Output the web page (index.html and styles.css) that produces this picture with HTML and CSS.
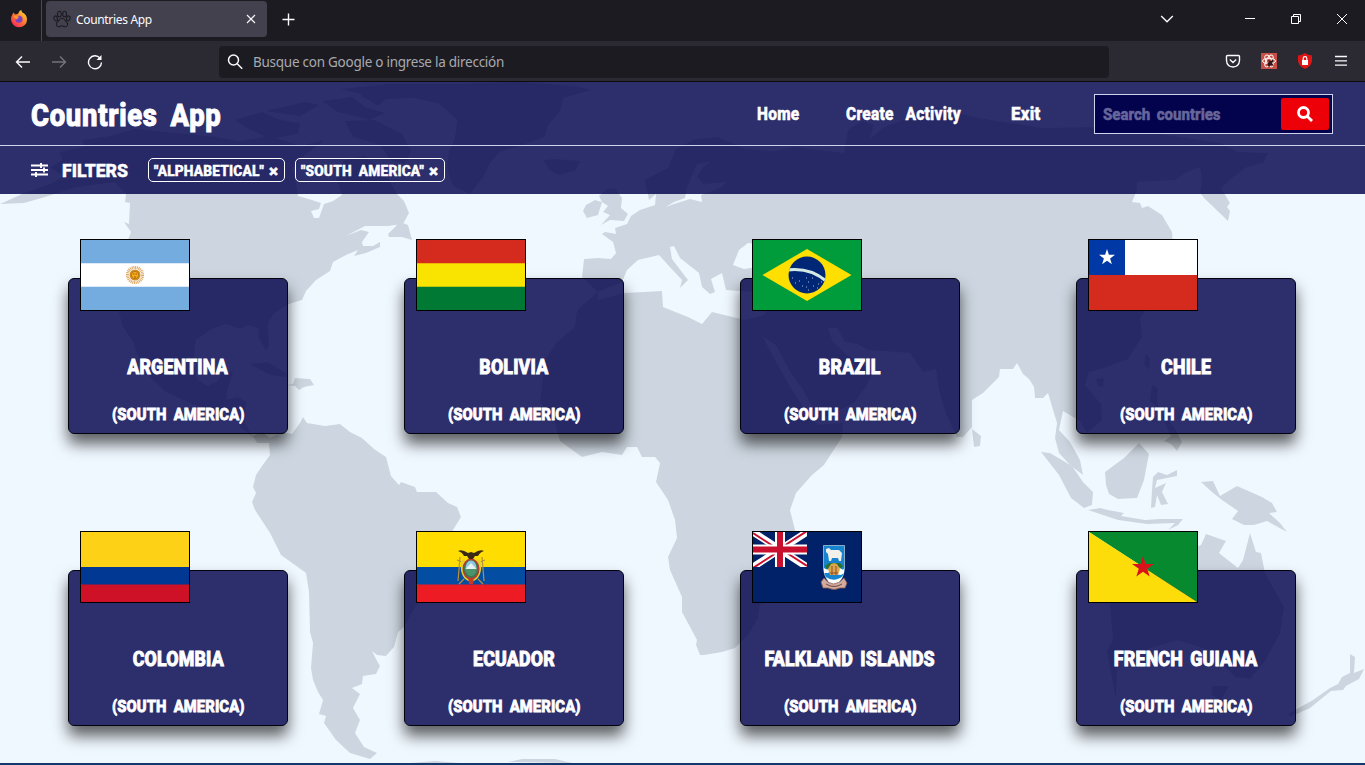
FILE: index.html
```html
<!DOCTYPE html>
<html lang="es">
<head>
<meta charset="utf-8">
<title>Countries App</title>
<link rel="stylesheet" href="styles.css">
</head>
<body>
<div class="browser">
  <div class="tabbar">
    <div class="fx">
      <svg width="18" height="18" viewBox="0 0 18 18"><defs><linearGradient id="fg" x1="1" y1="0" x2="0.2" y2="1"><stop offset="0" stop-color="#fff04a"/><stop offset=".45" stop-color="#ff8a2a"/><stop offset="1" stop-color="#f4235c"/></linearGradient></defs><path d="M2.4 4.6 3.6 2.6 5 4.4Q6.2 4 7.2 4.3 8.7 3.5 9.5 1L11.3 0 12 2.3Q16.8 4.2 17 9.4A8 7.8 0 0 1 1 9.6Q1 6.6 2.4 4.6Z" fill="url(#fg)"/><circle cx="9" cy="9.3" r="3.5" fill="#7b3fc4"/><path d="M3.5 6Q7 5 9.8 7.2 7.2 7.2 7.5 9.4 5 9.5 3.5 6Z" fill="#ff9630"/></svg>
    </div>
    <div class="tab">
      <svg class="paw" width="18" height="18" viewBox="0 0 18 18" fill="none" stroke="#1c1b22" stroke-width="1.1"><ellipse cx="6.4" cy="4" rx="1.9" ry="2.8"/><ellipse cx="11.6" cy="4" rx="1.9" ry="2.8"/><ellipse cx="2.7" cy="8.4" rx="1.7" ry="2.5" transform="rotate(-15 2.7 8.4)"/><ellipse cx="15.3" cy="8.4" rx="1.7" ry="2.5" transform="rotate(15 15.3 8.4)"/><path d="M9 8.2C6.2 8.2 6 11 4.3 12.2 2.6 13.8 3.5 16.8 6 16.7 7.5 16.5 8 15.8 9 15.8S10.5 16.5 12 16.7C14.5 16.8 15.4 13.8 13.7 12.2 12 11 11.8 8.2 9 8.2Z"/></svg>
      <span class="tab-title">Countries App</span>
      <svg width="10" height="10" viewBox="0 0 10 10" stroke="#fbfbfe" stroke-width="1.1"><path d="M1 1 9 9M9 1 1 9"/></svg>
    </div>
    <svg class="plus" width="13" height="13" viewBox="0 0 13 13" stroke="#fbfbfe" stroke-width="1.4"><path d="M6.5 .5V12.500M.5 6.500H12.500"/></svg>
    <div class="window-controls">
      <svg width="14" height="10" viewBox="0 0 14 10" fill="none" stroke="#fbfbfe" stroke-width="1.4"><path d="M1.200 2 7 7.800 12.800 2"/></svg>
      <svg class="min" width="10" height="10" viewBox="0 0 10 10" stroke="#fff"><path d="M0 4.500H10"/></svg>
      <svg width="10" height="10" viewBox="0 0 10 10" fill="none" stroke="#fff"><path d="M.5 2.500H7.500V9.500H.5ZM2.500 2.500V.5H9.500V7.500H7.500"/></svg>
      <svg width="10" height="10" viewBox="0 0 10 10" stroke="#fff"><path d="M0 0 10 10M10 0 0 10"/></svg>
    </div>
  </div>
  <div class="toolbar">
    <div class="nav-buttons">
      <svg width="16" height="16" viewBox="0 0 16 16" fill="none" stroke="#fbfbfe" stroke-width="1.400"><path d="M15 8H1.500M7 2.500 1.500 8 7 13.500"/></svg>
      <svg width="16" height="16" viewBox="0 0 16 16" fill="none" stroke="#74737b" stroke-width="1.400"><path d="M1 8H14.500M9 2.500 14.500 8 9 13.500"/></svg>
      <svg width="16" height="16" viewBox="0 0 16 16" fill="none" stroke="#fbfbfe" stroke-width="1.400"><path d="M13 4.100A6.500 6.500 0 1 0 14.500 8.500"/><path d="M14.500 1V6H9.500Z" fill="#fbfbfe" stroke="none"/></svg>
    </div>
    <div class="urlbar">
      <svg width="16" height="16" viewBox="0 0 16 16" fill="none" stroke="#fbfbfe" stroke-width="1.500"><circle cx="6.500" cy="6" r="5"/><path d="M10.200 9.700 15.200 14.800"/></svg>
      <span>Busque con Google o ingrese la dirección</span>
    </div>
    <div class="extensions">
      <svg width="16" height="16" viewBox="0 0 16 16" fill="none" stroke="#fbfbfe" stroke-width="1.400"><path d="M2.500 2.500H13.500Q14.500 2.500 14.500 3.500V7.500Q14 13.800 8 14 2 13.800 1.500 7.500V3.500Q1.500 2.500 2.500 2.500ZM4.800 6.500 8 9.500 11.200 6.500"/></svg>
      <svg width="16" height="16" viewBox="0 0 16 16"><path d="M0 0H16V16H0Z" fill="#c94f46"/><g fill="none" stroke="#fff" stroke-width="1"><ellipse cx="8" cy="8" rx="6.500" ry="2.700"/><ellipse cx="8" cy="8" rx="6.500" ry="2.700" transform="rotate(60 8 8)"/><ellipse cx="8" cy="8" rx="6.500" ry="2.700" transform="rotate(120 8 8)"/></g><path d="M7 7 10 8 12 6V9L11 10 13 13 10 12 8 14 6 11 8 9Z" fill="#30181c"/></svg>
      <svg width="16" height="16" viewBox="0 0 16 16"><path d="M8 0Q11 2 15 2.500V8Q14 13.500 8 16 2 13.500 1 8V2.500Q5 2 8 0Z" fill="#dd1515"/><path d="M5 7H11V12H5Z" fill="#fff"/><path d="M6.200 7V5.500A1.800 1.800 0 0 1 9.800 5.500V7" fill="none" stroke="#fff" stroke-width="1.200"/></svg>
      <svg class="burger" width="14" height="12" viewBox="0 0 14 12" stroke="#fbfbfe" stroke-width="1.300"><path d="M1 1.500H13M1 5.800H13M1 10.200H13"/></svg>
    </div>
  </div>
</div>

<div class="page">
  <svg class="map" viewBox="0 82 1365 681" preserveAspectRatio="none">
    <g fill="#cdd6e0">
      <path d="M0 204 22 194 50 184 64 176 50 168 62 160 60 152 84 147 83 140 110 136 135 129 175 133 215 137 240 141 270 136 300 146 325 140 305 155 292 168 296 182 298 196 312 200 321 203 319 209 311 211 314 218 319 218 324 204 333 201 342 195 336 178 344 160 365 156 385 172 397 194 404 201 409 213 403 224 388 226 365 226 346 236 361 230 369 232 362 242 363 246 373 246 380 242 380 247 366 253 354 256 358 250 346 255 333 262 330 271 316 280 306 291 302 300 289 304 274 313 268 323 269 345 266 351 259 338 258 328 248 325 240 329 226 324 212 329 196 340 193 362 197 379 207 386 218 381 222 373 233 372 227 391 226 400 238 397 246 402 245 423 252 436 262 432 270 438 282 432 292 434 300 423 303 417 307 423 325 426 340 424 350 432 362 438 374 449 386 457 391 476 399 485 401 482 415 487 417 492 436 492 448 503 457 507 461 517 453 530 446 543 442 568 430 590 418 602 404 627 398 632 394 647 386 656 377 655 372 651 376 659 380 666 376 674 363 676 362 684 352 688 360 694 353 708 360 720 355 733 364 747 377 753 370 759 350 753 336 740 324 723 326 716 319 714 323 700 318 692 313 680 311 668 313 643 310 632 309 592 306 573 281 555 270 533 255 510 252 502 256 493 253 487 256 475 262 466 270 455 269 443 257 443 254 438 240 427 237 418 221 411 208 409 192 404 166 392 152 379 140 362 128 328 127 319 132 325 137 347 153 372 135 345 122 325 119 312 128 260 128 240 131 232 124 222 129 224 130 203 125 202 126 194 115 182 100 184 73 188 45 197 24 203Z"/>
      <path d="M340 89 390 84 455 84 520 82 575 86 592 90 563 98 560 112 548 125 545 137 522 145 500 152 490 163 484 176 470 194 453 186 447 168 449 151 455 138 457 120 440 104 414 98 382 99Z"/>
      <path d="M235 120 262 112 280 120 300 123 298 134 270 139 245 127ZM265 111 305 102 320 105 300 116ZM322 101 352 97 365 107 385 113 370 120 338 112ZM345 121 375 120 402 134 411 151 405 164 390 160 380 145 353 137ZM360 95 395 91 378 106ZM544 160 555 159 580 161 575 171 558 175 548 169ZM250 364 268 362 286 373 287 377 270 375ZM295 378 310 379 314 385 304 387 299 390 295 386 287 385 293 384ZM388 234 400 222 408 225 412 240 402 237 389 237Z"/>
      <path fill-rule="evenodd" d="M649 200 645 180 668 168 676 149 695 139 718 137 745 149 775 151 794 147 844 153 848 130 862 121 874 125 870 139 884 127 909 118 936 107 978 118 1043 128 1097 127 1153 133 1220 143 1237 152 1268 153 1263 163 1247 167 1233 177 1221 188 1230 203 1227 207 1230 211 1228 221 1205 199 1200 193 1202 178 1200 167 1187 172 1175 180 1137 182 1137 190 1132 202 1140 203 1142 208 1148 206 1162 215 1172 232 1173 246 1162 290 1140 318 1142 337 1128 359 1104 368 1089 372 1085 385 1101 404 1102 420 1087 433 1080 421 1063 411 1059 430 1070 442 1080 460 1083 475 1070 465 1059 453 1055 438 1057 423 1048 393 1043 398 1035 398 1034 387 1029 379 1023 374 1017 363 1013 369 1000 369 999 377 983 393 972 400 972 427 963 437 957 437 946 414 939 390 936 369 923 372 910 353 868 350 857 344 845 342 837 328 828 328 833 342 847 355 862 364 873 372 867 385 854 403 820 419 815 413 804 391 789 370 776 345 763 337 775 360 789 385 803 407 818 425 843 423 842 437 824 465 812 475 796 493 790 510 795 530 788 568 775 588 760 605 758 618 748 635 735 648 722 652 704 655 700 655 696 645 697 640 682 612 682 597 670 570 668 557 677 538 675 520 668 500 656 482 660 463 655 457 642 457 637 447 627 447 622 455 602 452 582 457 560 441 555 423 540 402 545 360 556 343 575 327 577 310 592 297 598 292 582 277 584 259 598 258 611 259 616 253 613 242 602 234 605 232 616 234 615 228 627 224 631 216 640 210 655 205 656 194ZM687 187 685 198 674 202 666 207 674 204 690 199 702 202 701 195 720 188 727 182 704 184 697 177 702 168 710 162 697 164ZM598 292 622 282 627 270 638 260 659 255 668 265 682 280 680 288 688 280 672 259 670 247 674 246 680 258 699 273 702 287 710 294 715 292 711 279 722 273 726 290 752 292 769 305 764 315 745 320 712 312 702 324 688 317 663 307 662 291 625 293 598 300ZM733 265 739 250 748 243 766 245 778 258 768 265 744 269Z"/>
      <path d="M599 196 607 189 615 188 622 198 621 208 628 214 624 221 610 220 601 225 610 215 603 212 608 206 602 202ZM586 205 595 200 602 202 598 215 587 218 583 211ZM972 429 981 436 980 446 974 447ZM1041 452 1050 453 1072 466 1083 482 1093 492 1092 505 1084 508 1071 498 1059 475ZM1105 472 1124 458 1139 443 1149 454 1147 464 1144 480 1137 498 1118 499 1109 494 1106 485ZM1153 477 1158 472 1167 475 1177 470 1177 476 1157 480 1155 488 1166 483 1162 492 1168 504 1161 505 1157 495 1155 507 1151 508 1152 490ZM1088 510 1100 508 1108 510 1124 513 1121 516 1145 520 1160 519 1183 519 1178 525 1168 530 1175 523 1147 524 1118 520ZM1201 482 1213 481 1220 496 1237 486 1262 497 1272 503 1277 512 1269 513 1280 523 1287 532 1267 521 1254 525 1244 525 1232 519 1238 511 1222 500 1212 492ZM1116 700 1107 651 1113 640 1110 604 1140 586 1163 560 1180 552 1201 545 1206 534 1226 541 1219 553 1238 568 1243 560 1250 533 1256 552 1261 553 1265 573 1284 607 1280 633 1265 661 1250 679 1235 677 1209 650 1177 640 1145 650 1137 659 1117 660ZM1212 686 1229 686 1221 700 1212 695ZM1288 714 1313 700 1330 688 1338 684 1342 677 1350 673 1350 654 1355 657 1354 673 1364 669 1359 679 1346 686 1343 690 1331 691 1310 708 1290 717ZM1146 353 1150 359 1149 370 1144 364ZM1152 385 1158 388 1157 402 1160 410 1150 401ZM1160 412 1174 427 1182 442 1177 451 1171 444 1164 441 1171 436ZM1096 379 1104 378 1103 387 1098 386ZM508 762 522 759 555 759 572 763ZM410 763 435 761 460 763Z"/>
    </g>
  </svg>

  <header class="header">
    <h1 class="brand">Countries App</h1>
    <nav class="menu">
      <a class="home">Home</a><a class="create">Create Activity</a><a class="exit">Exit</a>
    </nav>
    <div class="search">
      <span class="placeholder">Search countries</span>
      <span class="search-btn"><svg width="16" height="16" viewBox="0 0 16 16" fill="none" stroke="#fff" stroke-width="2.800"><circle cx="6.500" cy="6.500" r="5"/><path d="M10.200 10.200 15 15"/></svg></span>
    </div>
  </header>
  <div class="filters">
    <svg width="17" height="14" viewBox="0 0 17 14" stroke="#fff" stroke-width="1.900"><path d="M0 2.500H17M0 7H17M0 11.500H17M10 0V5M13 4.500V9.500M5 9V14"/></svg>
    <span class="filters-title">FILTERS</span>
    <span class="chip chip-a"><span class="chip-label">"ALPHABETICAL"</span><b>×</b></span>
    <span class="chip chip-s"><span class="chip-label">"SOUTH AMERICA"</span><b>×</b></span>
  </div>

  <main class="cards">
    <article class="card">
      <svg class="flag" viewBox="0 0 108 70"><path fill="#74acdf" d="M0 0H108V70H0Z"/><path fill="#fff" d="M0 23.300H108V46.700H0Z"/><circle cx="54" cy="35" r="7.600" fill="none" stroke="#d9a763" stroke-width="3" stroke-dasharray="1 .7"/><circle cx="54" cy="35" r="5.500" fill="#d28b1d"/><circle cx="54" cy="35" r="3.600" fill="#f5ad18" stroke="#9b6419" stroke-width=".6"/><path d="M52 34H53.500M54.500 34H56M53 37H55" stroke="#85340a" stroke-width=".7"/></svg>
      <h2>ARGENTINA</h2><p>(SOUTH AMERICA)</p>
    </article>
    <article class="card">
      <svg class="flag" viewBox="0 0 108 70"><path fill="#d52b1e" d="M0 0H108V24H0Z"/><path fill="#f9e300" d="M0 23.300H108V47H0Z"/><path fill="#007934" d="M0 46.700H108V70H0Z"/></svg>
      <h2>BOLIVIA</h2><p>(SOUTH AMERICA)</p>
    </article>
    <article class="card">
      <svg class="flag" viewBox="0 0 108 70"><defs><clipPath id="br"><circle cx="54" cy="35" r="18.500"/></clipPath></defs><path fill="#009b3a" d="M0 0H108V70H0Z"/><path fill="#fedf00" d="M9.500 35 54 9 98.500 35 54 61Z"/><g clip-path="url(#br)"><path fill="#002776" d="M30 10H80V60H30Z"/><path d="M34 30Q58 27 74 42" fill="none" stroke="#d4ebe5" stroke-width="3"/><path d="M39 38h1M42 43h1M46 41h1M53 38h1M55 42h1M53 47h1M59 38h1M60 46h1M65 44h1M68 42h1M64 48h1M49 46h1M55 50h1" stroke="#d7e2ef" stroke-width=".8"/></g></svg>
      <h2>BRAZIL</h2><p>(SOUTH AMERICA)</p>
    </article>
    <article class="card">
      <svg class="flag" viewBox="0 0 108 70"><path fill="#fff" d="M0 0H108V35H0Z"/><path fill="#d52b1e" d="M0 35H108V70H0Z"/><path fill="#0039a6" d="M0 0H36V35H0Z"/><path fill="#fff" d="M18 9 19.900 14.800H26L21.100 18.500 22.900 24.300 18 20.700 13.100 24.300 14.900 18.500 10 14.800H16.100Z"/></svg>
      <h2>CHILE</h2><p>(SOUTH AMERICA)</p>
    </article>
    <article class="card">
      <svg class="flag" viewBox="0 0 108 70"><path fill="#fcd116" d="M0 0H108V35H0Z"/><path fill="#003893" d="M0 35H108V53H0Z"/><path fill="#ce1126" d="M0 52.500H108V70H0Z"/></svg>
      <h2>COLOMBIA</h2><p>(SOUTH AMERICA)</p>
    </article>
    <article class="card">
      <svg class="flag" viewBox="0 0 108 70"><path fill="#fd0" d="M0 0H108V35H0Z"/><path fill="#034ea2" d="M0 35H108V53H0Z"/><path fill="#ed1c24" d="M0 52.500H108V70H0Z"/><path d="M43 25 41 49M65 25 67 49M45 30 40 28M63 30 68 28M47 47 42 52M61 47 66 52" stroke="#b98f3b" stroke-width="1.200"/><path d="M44 29Q42 47 54 50 66 47 64 29L60 27Q65 46 54 47 43 46 48 27Z" fill="#e2d02f"/><ellipse cx="54" cy="37" rx="8.500" ry="10.500" fill="#b33b32"/><ellipse cx="54" cy="37" rx="7" ry="9" fill="#3b7b51"/><ellipse cx="54" cy="36" rx="5.500" ry="7.500" fill="#8cc9df"/><path d="M48.500 37 54 31 59.500 37Z" fill="#e8efef"/><path d="M48.500 37H59.500Q59 43 54 44 49 43 48.500 37Z" fill="#4b9368"/><path d="M41 19Q45 17 51 21L54 20 57 21Q63 17 67 19 63 20 61 24L58 24 56 27H52L50 24 47 24Q45 20 41 19Z" fill="#3a2a14"/><path d="M51 45 54 47 57 45 56 52H52Z" fill="#c53b26"/></svg>
      <h2>ECUADOR</h2><p>(SOUTH AMERICA)</p>
    </article>
    <article class="card">
      <svg class="flag" viewBox="0 0 108 70"><defs><clipPath id="uj"><path d="M0 0H54V35H0Z"/></clipPath></defs><path fill="#012169" d="M0 0H108V70H0Z"/><g clip-path="url(#uj)"><path d="M0 0 54 35M54 0 0 35" stroke="#fff" stroke-width="7"/><path d="M0 1 27 18.500M27 16.500 54 34M54-1 27 16.500M27 18.500 0 36" stroke="#c8102e" stroke-width="2"/><path d="M27 0V35M0 17.500H54" stroke="#fff" stroke-width="10"/><path d="M27 0V35M0 17.500H54" stroke="#c8102e" stroke-width="6"/></g><path d="M70.500 13.500H91.500V37Q90 50 81 52.500 72 50 70.500 37Z" fill="#1684cf" stroke="#a9c6d8" stroke-width=".8"/><path d="M72 34 76 31H87L90 34 88 37H74Z" fill="#2a7134"/><path d="M73 17 76 16 78 18H86L89 21 88 29H86L85 26H79L78 29H76L75 22 73 20Z" fill="#f1f0ea"/><path d="M71 36Q75 39 79 36T87 36 91 36V41Q87 45 83 41T75 41L71 41Z" fill="#fff"/><path d="M75 37 78 32 81 31 84 32 87 37 85 43H77Z" fill="#dba648"/><path d="M77 41H85M79 34V43M83 34V43" stroke="#8f4a34" stroke-width="1"/><path d="M73 45Q81 51 90 44L86 51Q81 54 76 51Z" fill="#fff"/><path d="M68 50 71 46Q80 58 91 46L94 51 92 56H87Q81 59 75 56H70Z" fill="#d2aaa0" stroke="#85594e" stroke-width=".8"/><path d="M73 52Q81 57 89 52" fill="none" stroke="#73483f" stroke-width="1"/></svg>
      <h2>FALKLAND ISLANDS</h2><p>(SOUTH AMERICA)</p>
    </article>
    <article class="card">
      <svg class="flag" viewBox="0 0 108 70"><path fill="#078930" d="M0 0H108V70Z"/><path fill="#fcdd09" d="M0 0 108 70H0Z"/><path fill="#da121a" d="M54 24 56.500 32H65L58.200 36.800 60.700 44.500 54 39.700 47.300 44.500 49.800 36.800 43 32H51.500Z"/></svg>
      <h2>FRENCH GUIANA</h2><p>(SOUTH AMERICA)</p>
    </article>
  </main>
  <div class="footer-edge"></div>
</div>
</body>
</html>
```
FILE: styles.css
```css
* { box-sizing: border-box; }
body { margin: 0; height: 765px; overflow: hidden; display: flex; flex-direction: column; }
svg { display: block; flex: none; }
h1, h2, p { margin: 0; }

.browser { font-family: "Noto Sans", sans-serif; color: #fbfbfe; flex: none; }
.tabbar { height: 41px; background: #1c1b22; display: flex; align-items: center; }
.fx { width: 42px; height: 41px; border-right: 1px solid #4a4950; display: flex; align-items: center; padding: 0 0 3px 10px; }
.tab { width: 221px; height: 36px; margin: 0 0 3px 4px; background: #42414d; border-radius: 4px; display: flex; align-items: center; padding: 0 11px 0 7px; }
.tab-title { flex: 1; font-size: 12px; letter-spacing: -.33px; margin-left: 5px; }
.plus { margin: 0 0 2px 15px; }
.window-controls { margin-left: auto; display: flex; align-items: center; padding: 0 18px 3px 0; }
.window-controls svg { margin-left: 36px; }
.window-controls .min { margin-left: 71px; }
.toolbar { height: 41px; background: #2b2a33; border-bottom: 1px solid #0c0c0d; display: flex; align-items: center; }
.nav-buttons { display: flex; gap: 20px; padding: 1px 0 0 15px; width: 219px; }
.urlbar { width: 890px; height: 32px; margin-top: 1px; background: #1c1b22; border-radius: 4px; display: flex; align-items: center; gap: 10px; padding-left: 8px; font-size: 13.5px; letter-spacing: -.26px; color: #a9a9ae; }
.extensions { display: flex; align-items: center; gap: 20px; margin-left: auto; padding-right: 17px; }
.burger { margin-left: 1px; }

.page { position: relative; flex: 1; background: #f0f8ff; color: #fff; font-family: Roboto, sans-serif; font-weight: 800; -webkit-text-stroke: .5px currentColor; display: flex; flex-direction: column; }
.map { position: absolute; left: 0; top: 0; width: 1365px; height: 681px; }
.header, .filters, .cards, .footer-edge { position: relative; }
.header { height: 64px; background: rgba(0, 0, 74, .81); border-bottom: 1px solid #cfd3ee; display: flex; align-items: center; padding: 0 32px 0 31px; }
.brand { width: 193px; font-size: 31px; line-height: 40px; font-weight: 800; letter-spacing: .8px; word-spacing: 6px; padding-top: 4px; white-space: nowrap; -webkit-text-stroke-width: 1px; }
.brand, .menu a, .placeholder, .chip-label { transform-origin: 0 50%; transform: scaleX(.885); }
.menu { margin-left: auto; display: flex; gap: 48px; font-size: 18px; letter-spacing: .3px; white-space: nowrap; }
.menu a { display: block; transform: translateX(1px) scaleX(.86); }
.home { width: 41px; }
.create { width: 117px; word-spacing: 9px; }
.menu .exit { width: 30px; transform: translateX(1px) scaleX(.94); }
.search { width: 239px; height: 40px; margin-left: 54px; background: #02024d; border: 1px solid #cfd3ee; display: flex; align-items: center; padding: 0 3px 0 8px; }
.placeholder { flex: 1; min-width: 0; color: #66669a; font-size: 17px; word-spacing: 3px; white-space: nowrap; }
.search-btn { flex: none; width: 48px; height: 32px; border-radius: 2px; background: #ee0008; display: flex; align-items: center; justify-content: center; }
.filters { height: 48px; background: rgba(0, 0, 74, .81); display: flex; align-items: center; padding-left: 31px; white-space: nowrap; }
.filters-title { width: 66px; margin-left: 14px; font-size: 19px; transform-origin: 0 50%; transform: scaleX(.93); }
.chip { height: 24px; border: 1px solid #fff; border-radius: 5px; display: flex; align-items: center; padding: 2px 6px 0 5px; font-size: 15.5px; letter-spacing: .2px; word-spacing: 4px; }
.chip-label { flex: 1; min-width: 0; }
.chip b { font-size: 17px; letter-spacing: 0; }
.chip-a { width: 137px; margin-left: 20px; }
.chip-s { width: 150px; margin-left: 10px; }

.cards { flex: 1; display: grid; grid-template-columns: repeat(4, 220px); grid-auto-rows: 156px; column-gap: 116px; row-gap: 136px; padding: 84px 0 0 68px; align-content: start; }
.card { background: rgba(0, 0, 74, .81); border: 1px solid #02020f; border-radius: 6px; box-shadow: 0 10px 15px rgba(0, 0, 0, .62); display: flex; flex-direction: column; align-items: center; white-space: nowrap; }
.flag { width: 110px; height: 72px; border: 1px solid #000; margin: -40px 0 0 11px; align-self: flex-start; }
.card h2 { font-size: 20px; line-height: 26px; font-weight: 800; margin-top: 43px; letter-spacing: .2px; word-spacing: 3px; transform: scaleX(.89); -webkit-text-stroke-width: .9px; }
.card p { font-size: 17px; line-height: 22px; margin-top: 23px; letter-spacing: .1px; word-spacing: 4px; transform: scaleX(.87); -webkit-text-stroke-width: .8px; }
.footer-edge { height: 2px; background: #12386e; }
```
